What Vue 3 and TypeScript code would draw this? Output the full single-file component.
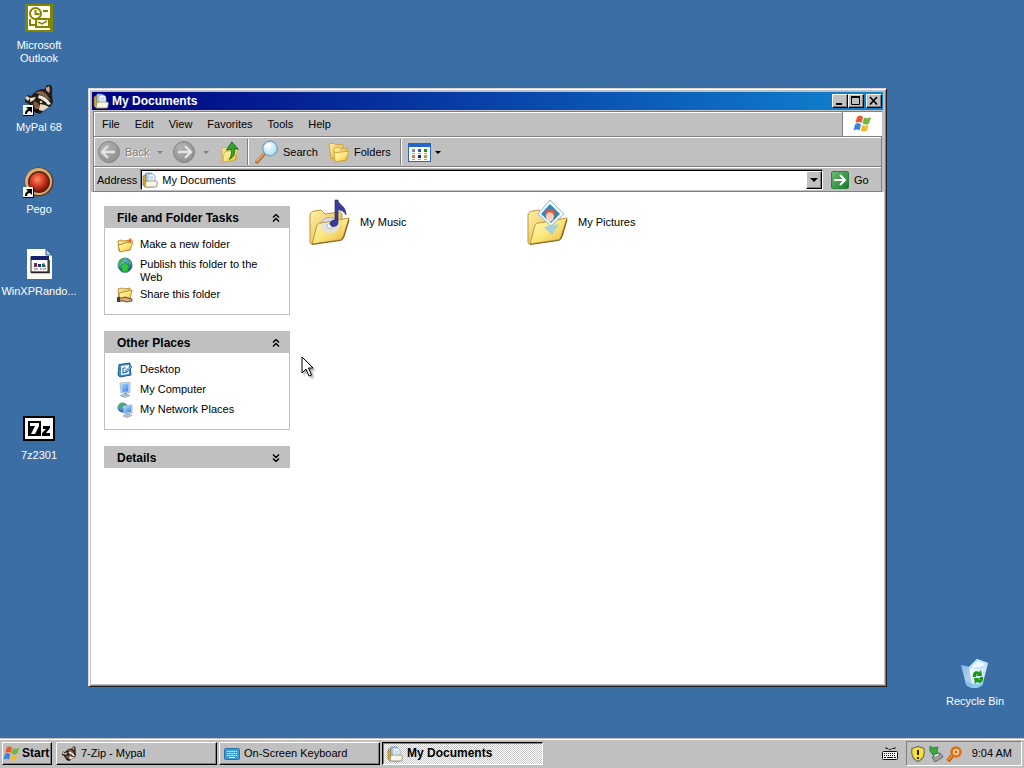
<script setup lang="ts">
import { ref } from 'vue'

interface Entry {
  icon: string
  label: string
}
interface DesktopItem extends Entry {
  row: number
  shortcut?: boolean
}
interface Task extends Entry {
  active?: boolean
}
interface Panel {
  title: string
  open: boolean
  items: Entry[]
}

const desktopItems: DesktopItem[] = [
  { icon: 'outlook', label: 'Microsoft Outlook', row: 1 },
  { icon: 'raccoon', label: 'MyPal 68', row: 2, shortcut: true },
  { icon: 'pego', label: 'Pego', row: 3, shortcut: true },
  { icon: 'script', label: 'WinXPRando...', row: 4 },
  { icon: 'sevenzip', label: '7z2301', row: 6 },
]

const menus: string[] = ['File', 'Edit', 'View', 'Favorites', 'Tools', 'Help']

const panels = ref<Panel[]>([
  {
    title: 'File and Folder Tasks',
    open: true,
    items: [
      { icon: 'newfolder', label: 'Make a new folder' },
      { icon: 'publish', label: 'Publish this folder to the Web' },
      { icon: 'share', label: 'Share this folder' },
    ],
  },
  {
    title: 'Other Places',
    open: true,
    items: [
      { icon: 'desk', label: 'Desktop' },
      { icon: 'computer', label: 'My Computer' },
      { icon: 'network', label: 'My Network Places' },
    ],
  },
  { title: 'Details', open: false, items: [] },
])

const folders: Entry[] = [
  { icon: 'music', label: 'My Music' },
  { icon: 'pictures', label: 'My Pictures' },
]

const tasks: Task[] = [
  { icon: 'raccoon', label: '7-Zip - Mypal' },
  { icon: 'keyboard', label: 'On-Screen Keyboard' },
  { icon: 'docs', label: 'My Documents', active: true },
]

const address = ref('My Documents')
</script>

<template>
  <div class="screen">
    <svg class="defs" aria-hidden="true">
      <defs>
        <linearGradient id="gFolder" x1="0" y1="0" x2="1" y2="1">
          <stop offset="0" stop-color="#fffbc4" />
          <stop offset="0.5" stop-color="#fbe87c" />
          <stop offset="1" stop-color="#e8b43c" />
        </linearGradient>
        <linearGradient id="gBack" x1="0" y1="0" x2="1" y2="1">
          <stop offset="0" stop-color="#fff3a6" />
          <stop offset="1" stop-color="#dda93a" />
        </linearGradient>
        <radialGradient id="gGrey" cx="0.35" cy="0.3" r="0.8">
          <stop offset="0" stop-color="#b4b4b4" />
          <stop offset="1" stop-color="#8c8c8c" />
        </radialGradient>
        <radialGradient id="gRed" cx="0.42" cy="0.36" r="0.65">
          <stop offset="0" stop-color="#ff8a66" />
          <stop offset="0.5" stop-color="#d84028" />
          <stop offset="1" stop-color="#7e1208" />
        </radialGradient>
        <radialGradient id="gLens" cx="0.4" cy="0.35" r="0.7">
          <stop offset="0" stop-color="#ffffff" />
          <stop offset="1" stop-color="#9fdcf6" />
        </radialGradient>
        <linearGradient id="gGo" x1="0" y1="0" x2="1" y2="1">
          <stop offset="0" stop-color="#6cc070" />
          <stop offset="1" stop-color="#127a26" />
        </linearGradient>
        <linearGradient id="gScreen" x1="0" y1="0" x2="1" y2="1">
          <stop offset="0" stop-color="#a8dcff" />
          <stop offset="1" stop-color="#3b7fdc" />
        </linearGradient>
        <linearGradient id="gBin" x1="0" y1="0" x2="1" y2="0.7">
          <stop offset="0" stop-color="#7fb4e4" />
          <stop offset="0.45" stop-color="#f2faff" />
          <stop offset="1" stop-color="#b4dcf4" />
        </linearGradient>
        <radialGradient id="gGlobe" cx="0.35" cy="0.3" r="0.8">
          <stop offset="0" stop-color="#7cc4e8" />
          <stop offset="1" stop-color="#12508c" />
        </radialGradient>
      </defs>

      <symbol id="outlook" viewBox="0 0 32 32">
        <rect x="2" y="2" width="28" height="28" fill="#848400" />
        <rect x="5" y="4" width="22" height="24" fill="#fffff2" />
        <path d="M7 17v6h5" fill="none" stroke="#848400" stroke-width="2" />
        <rect x="13" y="17" width="13" height="8" fill="#fffff2" stroke="#848400" stroke-width="2" />
        <path d="M15 20l4 2 5-3" fill="none" stroke="#848400" stroke-width="1.500" />
        <circle cx="12.500" cy="11.500" r="5.500" fill="#fffff2" stroke="#848400" stroke-width="2" />
        <path d="M12.500 8v4h4M20 9h5" fill="none" stroke="#848400" stroke-width="2" />
      </symbol>

      <symbol id="raccoon" viewBox="0 0 32 32">
        <path d="M2 14l2-3 4 1 4-4c4-3 7-3 10-3l2-4 4 0c2 4 1 7 1 10l1 7-2 4-6 4-5 4-6-2-5-8-4-2z" fill="#241c17" />
        <path d="M23 4l3-2c1 3 1 5 0 7l-3-3z" fill="#d0a488" />
        <path d="M2 14l2-2 3 2-2 3z" fill="#ead8c8" />
        <path d="M12 9c5-3 9-2 12 2l4 6-5-3c-4-3-7-4-11-5z" fill="#85664f" />
        <path d="M16 11c5 1 9 4 12 9l-3 1c-3-4-6-6-10-7z" fill="#f6eee4" />
        <path d="M7 14l6-1-2 3-4 2z" fill="#f0e4d6" />
        <path d="M11 17l4 2 2 5-3 3-4-6z" fill="#80583c" />
        <path d="M17 20l5 1 4 2-6 4-4-1z" fill="#e8dacb" />
        <circle cx="18" cy="18" r="1.300" fill="#e7c08e" />
        <circle cx="14" cy="27" r="2" fill="#080808" />
      </symbol>

      <symbol id="pego" viewBox="0 0 32 32">
        <circle cx="16" cy="16" r="14.500" fill="#5e3d22" />
        <circle cx="15.500" cy="15.500" r="13.500" fill="#d8b07a" />
        <circle cx="16" cy="16" r="11" fill="#64210f" />
        <circle cx="16" cy="16" r="9.500" fill="url(#gRed)" />
      </symbol>

      <symbol id="script" viewBox="0 0 32 32">
        <path d="M4 1h19l6 6v24H4z" fill="#fbfbf4" />
        <path d="M23 1v6h6z" fill="#bfd2e8" stroke="#29588c" />
        <rect x="8" y="9" width="17" height="15" fill="#fff" stroke="#222" />
        <rect x="8" y="8" width="18" height="4" fill="#16206e" />
        <path d="M8 24.500h18V12" fill="none" stroke="#222" stroke-width="1.500" />
        <path d="M11 15h3v4h-3z" fill="#7b2a48" />
        <path d="M15 16h3v3h-3z" fill="#1c2c90" />
        <path d="M19 16l2-1 2 4h-4z" fill="#1c6a4a" />
        <path d="M11 21h4M17 21h2M20 21h3" stroke="#a05060" />
      </symbol>

      <symbol id="sevenzip" viewBox="0 0 32 32">
        <rect y="4" width="32" height="25" fill="#000" />
        <rect x="2" y="6" width="28" height="21" fill="#fff" />
        <rect x="5" y="9" width="13" height="15" fill="#000" />
        <path d="M7 11h9v3l-4 8H8l4-8H7z" fill="#fff" />
        <path d="M20 14h7v2l-4 5h4v3h-8v-3l4-4h-3z" fill="#000" />
      </symbol>

      <symbol id="shortcut" viewBox="0 0 11 11">
        <rect width="11" height="11" fill="#000" />
        <rect width="10" height="10" fill="#fff" />
        <path d="M3 2h6v6L7 6C5 6 4 7 4 9H2c0-3 1-4 3-5z" fill="#000" />
      </symbol>

      <symbol id="bin" viewBox="0 0 32 32">
        <path d="M2 7l8 2 8-8 11 4-5 20c-1 6-14 7-17 1z" fill="url(#gBin)" />
        <path d="M10 9l8-8 11 4-3 4c-5 3-11 2-16 0z" fill="#c2e0f6" />
        <path d="M12 9l7-6 7 3c-3 3-8 5-14 3z" fill="#eef8ff" />
        <path d="M2 7l8 2 3 20c-3 0-5-1-6-3z" fill="#6ca4da" opacity="0.500" />
        <path d="M6 22c5 5 13 5 18 2l-1 3c-3 4-13 4-16 0z" fill="#74bcea" opacity="0.700" />
        <path d="M14 19c-1-5 3-7 6-5l2-2 1 6h-6l2-2c-2 0-2 1-2 3zM24 19c1 5-3 7-6 5l-2 2-1-6h6l-2 2c2 0 2-1 2-3z" fill="#1e961e" />
      </symbol>

      <symbol id="docs" viewBox="0 0 16 16">
        <path d="M1 4l3-2v8l10 3-2 2H3l-2-2z" fill="#d9a72c" stroke="#8c6a14" stroke-width="0.600" />
        <path d="M4 1h5l2 2v8H4z" fill="#cfe4ff" stroke="#4b7dc0" stroke-width="0.800" />
        <path d="M6 2h5l2 2v7H6z" fill="#fff" stroke="#6c98d0" stroke-width="0.800" />
        <path d="M7.500 5h4M7.500 7h4" stroke="#8ab4e4" stroke-width="0.900" />
        <path d="M4 9h10.500l1 1-1 5H3z" fill="#f8f6e4" stroke="#8c8c68" stroke-width="0.800" />
      </symbol>

      <symbol id="flag" viewBox="0 0 20 18">
        <path d="M4 2c2-2 4-2 6 0L8.500 8C7 6.500 4.500 6.500 2.500 8z" fill="#f0532a" />
        <path d="M11 2.500c2 1 4 1 7-.5L16 8.500c-2 1.500-4 1.500-6.500 0z" fill="#72b63c" />
        <path d="M2 9.500c2-2 4-2 6 0L6.500 15.500C5 14 3 14 .5 15.500z" fill="#3f83dc" />
        <path d="M9.200 10c2 1 4 1 6.500-.5l-1.700 6c-2 1.500-4 1.500-6.300 0z" fill="#f4bc2a" />
      </symbol>

      <symbol id="back" viewBox="0 0 22 22">
        <circle cx="11" cy="11" r="10.500" fill="url(#gGrey)" stroke="#858585" />
        <path d="M10 5l-6 6 6 6M4.500 11H17" fill="none" stroke="#e4e4e4" stroke-width="2.400" />
      </symbol>
      <symbol id="forward" viewBox="0 0 22 22">
        <circle cx="11" cy="11" r="10.500" fill="url(#gGrey)" stroke="#858585" />
        <path d="M12 5l6 6-6 6M17.500 11H5" fill="none" stroke="#e4e4e4" stroke-width="2.400" />
      </symbol>

      <symbol id="up" viewBox="0 0 22 24">
        <path d="M2 8l5-1 2 2 9-2v13L3 23z" fill="url(#gBack)" stroke="#c89c30" stroke-width="0.700" />
        <path d="M5 12l15-3-4 12-13 2z" fill="url(#gFolder)" stroke="#c89c30" stroke-width="0.700" />
        <path d="M13 1l7 8-4-1c1 6-1 10-6 12 3-4 3-8 2-11L7 10z" fill="#2fa52c" stroke="#0f6417" stroke-width="0.900" />
      </symbol>

      <symbol id="search" viewBox="0 0 24 24">
        <path d="M9 14l-7 8" stroke="#b5783c" stroke-width="3.600" stroke-linecap="round" />
        <path d="M9 13l-7 8" stroke="#e6b078" stroke-width="1.200" stroke-linecap="round" />
        <circle cx="15" cy="8.500" r="7.300" fill="url(#gLens)" stroke="#7d9db8" stroke-width="1.300" />
        <path d="M10.500 8a5 5 0 0 1 5-4" fill="none" stroke="#fff" stroke-width="2" />
      </symbol>

      <symbol id="folders" viewBox="0 0 22 22">
        <path d="M1 3l5-1 2 2 7-1v12L3 18z" fill="url(#gBack)" stroke="#c89c30" stroke-width="0.800" />
        <path d="M6 7l5-1 2 2 6-1v12L7 21z" fill="url(#gBack)" stroke="#c89c30" stroke-width="0.800" />
        <path d="M6 12l15-2-3 9-11 2z" fill="url(#gFolder)" stroke="#c89c30" stroke-width="0.800" />
      </symbol>

      <symbol id="views" viewBox="0 0 23 19">
        <rect x="0.500" y="0.500" width="22" height="18" fill="#fff" stroke="#2c66bc" />
        <rect width="23" height="4" fill="#2466c8" />
        <path d="M4 6h3v3H4z" fill="#8888a0" />
        <path d="M10 6h3v3h-3z" fill="#2858b8" />
        <path d="M16 6h3v3h-3z" fill="#1c8c24" />
        <path d="M4 12h3v3H4z" fill="#e07838" />
        <path d="M10 12h3v3h-3z" fill="#142c78" />
        <path d="M16 12h3v3h-3z" fill="#b8a030" />
        <path d="M4 10.500h3M10 10.500h3M16 10.500h3M4 16.500h3M10 16.500h3M16 16.500h3" stroke="#9ca8b8" />
      </symbol>

      <symbol id="go" viewBox="0 0 18 18">
        <rect x="0.500" y="0.500" width="17" height="17" rx="1" fill="url(#gGo)" stroke="#2d8240" />
        <path d="M9 4l5 5-5 5M14 9H3" fill="none" stroke="#fff" stroke-width="2" />
      </symbol>

      <symbol id="newfolder" viewBox="0 0 16 16">
        <path d="M1 4l4-1 1 1 7-1v10L2 14z" fill="url(#gBack)" stroke="#a87c20" stroke-width="0.800" />
        <path d="M1 8l5-1 1-1 9-1-3 8-10 2z" fill="url(#gFolder)" stroke="#a87c20" stroke-width="0.800" />
        <path d="M13 .5l1 2 2 .5-2 1.500-.5 2-1.500-1.500-2-.5 2-1.500z" fill="#ec6a24" />
      </symbol>
      <symbol id="publish" viewBox="0 0 16 16">
        <circle cx="8" cy="8" r="7.500" fill="url(#gGlobe)" />
        <path d="M2 4c2-3 5-3 6-3L7 4 4 7 1 8zM11 2l3 3 1 3-3-1z" fill="#4cae50" />
        <path d="M8 5l6 6h-3v4H5v-4H2z" fill="#36c63e" stroke="#0c7422" stroke-width="0.700" />
      </symbol>
      <symbol id="share" viewBox="0 0 16 16">
        <path d="M1 2l4-1 2 1 6-1v9L2 13z" fill="url(#gBack)" stroke="#a87c20" stroke-width="0.800" />
        <path d="M2 6l13-3-2 9-10 2z" fill="url(#gFolder)" stroke="#a87c20" stroke-width="0.800" />
        <path d="M2 11h3l3-1 3 1 4 1v2l-5 1-4-1H2z" fill="#d8a878" stroke="#4c3420" stroke-width="0.800" />
        <path d="M0 10h3v5H0z" fill="#34405c" />
      </symbol>
      <symbol id="desk" viewBox="0 0 16 16">
        <path d="M2 2.500L13 1l1 12-11 2-2-2z" fill="#3d8cc8" stroke="#205c94" />
        <path d="M4 4l8-1v9l-8 1z" fill="#f4faff" />
        <path d="M6 6h3M6 6v5l4-1V8" fill="none" stroke="#2d76b4" stroke-width="1.200" />
        <path d="M8 9l6-5 1 1-5 5z" fill="#9ccaf0" stroke="#205c94" stroke-width="0.700" />
      </symbol>
      <symbol id="computer" viewBox="0 0 16 16">
        <path d="M3 1l10-.5v10L4 11z" fill="#d6e6f6" stroke="#8ca4c0" stroke-width="0.700" />
        <path d="M4 2l7.500-.4v8L5 10z" fill="url(#gScreen)" />
        <path d="M7 11h3v2H7z" fill="#8aa8c8" />
        <path d="M3 13.500l6-1.500 4 1.500-5 2z" fill="#b4c8dc" stroke="#7890ac" stroke-width="0.600" />
      </symbol>
      <symbol id="network" viewBox="0 0 16 16">
        <circle cx="5.500" cy="5.500" r="5" fill="url(#gGlobe)" />
        <path d="M2 3c2-2 4-2 5-2L5 5 2 7zM6 6l3 1-3 3z" fill="#3cb44c" />
        <path d="M6 4l9-1v8l-8 1z" fill="#d6e6f6" stroke="#7c9cc0" stroke-width="0.700" />
        <path d="M7 5l7-1v6l-6.500 1z" fill="url(#gScreen)" />
        <path d="M6 14l5-2 4 1.500-5 2z" fill="#b4c8dc" stroke="#7890ac" stroke-width="0.600" />
      </symbol>

      <symbol id="music" viewBox="0 0 48 48">
        <path d="M4 17c0-3 3-4 5-4l6-1 4 4 14-2c3 0 3 2 3 4v22L6 46c-2 0-2-1-2-3z" fill="url(#gBack)" stroke="#c09434" />
        <ellipse cx="24" cy="28" rx="10" ry="8.500" fill="#dcdcec" stroke="#a8a8c0" />
        <path d="M11 27c1-1 2-2 4-2l28-5-6 19c-1 2-2 3-4 3L6 46z" fill="url(#gFolder)" fill-opacity="0.900" stroke="#c09434" />
        <path d="M15 26l19-3c1 6-4 12-10 12-5 0-9-4-9-9z" fill="#dedeea" opacity="0.800" />
        <ellipse cx="24" cy="28" rx="3" ry="2.500" fill="#f8f8ff" stroke="#b8b8cc" />
        <path d="M29 2h3c0 5 8 5 8 15-2-4-5-5-8-5v13c0 4-7 5-8 1 0-3 3-4 5-4z" fill="#3c3c98" stroke="#202060" stroke-width="0.600" />
        <path d="M6 46.500l28-4c2 0 3-2 4-4l5-17" fill="none" stroke="#826420" stroke-width="1.200" />
      </symbol>
      <symbol id="pictures" viewBox="0 0 48 48">
        <path d="M4 17c0-3 3-4 5-4l6-1 4 4 14-2c3 0 3 2 3 4v22L6 46c-2 0-2-1-2-3z" fill="url(#gBack)" stroke="#c09434" />
        <path d="M11 27c1-1 2-2 4-2l28-5-6 19c-1 2-2 3-4 3L6 46z" fill="url(#gFolder)" stroke="#c09434" />
        <path d="M6 46.500l28-4c2 0 3-2 4-4l5-17" fill="none" stroke="#826420" stroke-width="1.200" />
        <path d="M26 2l14 14-13 12-13-12z" fill="#f4f9ff" stroke="#9cb4cc" />
        <path d="M26 6l10 10-9 9-10-9z" fill="#2c88bc" />
        <circle cx="26" cy="16" r="5" fill="#e4583c" />
        <path d="M22 18c0-5 7-5 8 0l-1 4-3 2-3-2z" fill="#f8d0bc" />
        <path d="M20 29l15-3-7 11z" fill="#94ccec" fill-opacity="0.850" />
      </symbol>

      <symbol id="keyboard" viewBox="0 0 16 16">
        <rect x="0.500" y="2.500" width="15" height="11" rx="1" fill="#3d9cd4" stroke="#2474a8" />
        <path d="M3 5.500h10M3 7.500h10M3 9.500h10" stroke="#d8f2ff" stroke-dasharray="1.500 0.700" />
        <path d="M5 11.500h6" stroke="#d8f2ff" />
      </symbol>
      <symbol id="traykey" viewBox="0 0 16 14">
        <path d="M4 0v1.500h2l1 1h2l1-1h3V0" fill="none" stroke="#222" />
        <rect x="0.500" y="4.500" width="15" height="8" rx="1" fill="#f4f4f4" stroke="#111" />
        <path d="M2 6.500h12M2 8.500h12" stroke="#111" stroke-dasharray="1 1" />
        <path d="M2 10.500h2M5 10.500h6M12 10.500h2" stroke="#111" />
      </symbol>
      <symbol id="shield" viewBox="0 0 16 16">
        <path d="M8 .5l6 2c1 6-1 11-6 13-5-2-7-7-6-13z" fill="#f8e22c" stroke="#6c6c6c" stroke-width="1.200" />
        <path d="M8 4v5M8 11v2" stroke="#222" stroke-width="2" />
      </symbol>
      <symbol id="eject" viewBox="0 0 16 16">
        <path d="M4 11l8-4 3 4-8 5z" fill="#a0a4a0" stroke="#505450" stroke-width="0.800" />
        <path d="M5 8l5-1 2 2-5 3z" fill="#d8dcd8" stroke="#505450" stroke-width="0.600" />
        <path d="M2 0l3 2 5-1-1 3 1 3-5 2-3-4z" fill="#38ac3c" stroke="#146c20" stroke-width="0.700" />
      </symbol>
      <symbol id="key" viewBox="0 0 16 16">
        <path d="M6 10l-4 5" stroke="#c45208" stroke-width="4" />
        <circle cx="10" cy="6" r="4.500" fill="#f4d4b0" stroke="#e06c10" stroke-width="2.600" />
        <path d="M6 10l-4 4" stroke="#f48820" stroke-width="2" />
        <circle cx="10" cy="6" r="1.500" fill="#e06c10" />
      </symbol>
      <symbol id="chevrons" viewBox="0 0 8 8">
        <path d="M1 3.500l3-3 3 3M1 7.500l3-3 3 3" fill="none" stroke="#000" stroke-width="1.400" />
      </symbol>
    </svg>

    <main class="desktop">
      <div class="icon-grid">
        <button
          v-for="item in desktopItems"
          :key="item.label"
          class="shortcut-item"
          :class="`row-${item.row}`"
          type="button"
        >
          <span class="pic">
            <svg class="i32"><use :href="`#${item.icon}`" /></svg>
            <svg v-if="item.shortcut" class="overlay"><use href="#shortcut" /></svg>
          </span>
          <span class="caption">{{ item.label }}</span>
        </button>
      </div>

      <button class="shortcut-item recycle" type="button">
        <svg class="i32"><use href="#bin" /></svg>
        <span class="caption">Recycle Bin</span>
      </button>

      <section class="window" aria-label="My Documents">
        <header class="titlebar">
          <svg class="i16"><use href="#docs" /></svg>
          <h1>My Documents</h1>
          <div class="controls">
            <button class="ctl" type="button" aria-label="Minimize">
              <svg viewBox="0 0 12 10"><path d="M2 8h6" stroke="#000" stroke-width="2" /></svg>
            </button>
            <button class="ctl" type="button" aria-label="Maximize">
              <svg viewBox="0 0 12 10"><path d="M1.500 1v7.500h8V1" fill="none" stroke="#000" /><path d="M1 1h9" stroke="#000" stroke-width="2" /></svg>
            </button>
            <button class="ctl close" type="button" aria-label="Close">
              <svg viewBox="0 0 12 10"><path d="M2 1l7 7.500M9 1L2 8.500" stroke="#000" stroke-width="1.700" /></svg>
            </button>
          </div>
        </header>

        <nav class="menubar">
          <div class="menus">
            <button v-for="m in menus" :key="m" type="button">{{ m }}</button>
          </div>
          <div class="brand"><svg class="brand-flag"><use href="#flag" /></svg></div>
        </nav>

        <div class="toolbar">
          <button class="tool dim back-tool" type="button" disabled>
            <svg class="i22"><use href="#back" /></svg>Back<i class="arrow grey"></i>
          </button>
          <button class="tool dim forward-tool" type="button" disabled aria-label="Forward">
            <svg class="i22"><use href="#forward" /></svg><i class="arrow grey"></i>
          </button>
          <button class="tool" type="button" aria-label="Up">
            <svg class="i22"><use href="#up" /></svg>
          </button>
          <span class="sep"></span>
          <button class="tool search-tool" type="button">
            <svg class="i24"><use href="#search" /></svg>Search
          </button>
          <button class="tool folder-tool" type="button">
            <svg class="i22"><use href="#folders" /></svg>Folders
          </button>
          <span class="sep"></span>
          <button class="tool views-tool" type="button" aria-label="Views">
            <svg class="views-icon"><use href="#views" /></svg><i class="arrow"></i>
          </button>
        </div>

        <form class="addressbar" @submit.prevent>
          <label for="address">Address</label>
          <div class="combo">
            <svg class="i16"><use href="#docs" /></svg>
            <input id="address" v-model="address" type="text" />
            <button type="button" class="drop" aria-label="Show addresses"><i class="arrow wide"></i></button>
          </div>
          <button class="go" type="submit"><svg class="i18"><use href="#go" /></svg>Go</button>
        </form>

        <div class="content">
          <aside class="side">
            <section v-for="p in panels" :key="p.title" class="panel">
              <h2>
                <button type="button" :aria-expanded="p.open" @click="p.open = !p.open">
                  {{ p.title }}
                  <svg class="chev" :class="{ down: !p.open }"><use href="#chevrons" /></svg>
                </button>
              </h2>
              <ul v-if="p.open && p.items.length">
                <li v-for="it in p.items" :key="it.label">
                  <a href="#"><svg class="i16"><use :href="`#${it.icon}`" /></svg><span>{{ it.label }}</span></a>
                </li>
              </ul>
            </section>
          </aside>
          <div class="files">
            <button v-for="f in folders" :key="f.label" class="folder" type="button">
              <svg class="i48"><use :href="`#${f.icon}`" /></svg>{{ f.label }}
            </button>
          </div>
        </div>
      </section>

      <svg class="cursor" viewBox="0 0 13 21" aria-hidden="true">
        <path d="M1 1v16l4-4 3 7 2.500-1L7.500 12H12z" fill="#fff" stroke="#000" />
      </svg>
    </main>

    <footer class="taskbar">
      <button class="start" type="button"><svg class="start-flag"><use href="#flag" /></svg>Start</button>
      <div class="tasks">
        <button
          v-for="t in tasks"
          :key="t.label"
          class="task"
          :class="{ active: t.active }"
          type="button"
        >
          <svg class="i16"><use :href="`#${t.icon}`" /></svg><span>{{ t.label }}</span>
        </button>
      </div>
      <button class="language" type="button" aria-label="Keyboard"><svg class="key-icon"><use href="#traykey" /></svg></button>
      <div class="tray">
        <svg class="i16"><use href="#shield" /></svg>
        <svg class="i16"><use href="#eject" /></svg>
        <svg class="i16"><use href="#key" /></svg>
        <time>9:04 AM</time>
      </div>
    </footer>
  </div>
</template>

<style>
body {
  margin: 0;
}
</style>

<style scoped>
.screen {
  display: flex;
  flex-direction: column;
  height: 100vh;
  overflow: hidden;
  background: #3a6ea5;
  color: #000;
  font: 11px/13px "Liberation Sans", Arial, sans-serif;
}
.screen * {
  box-sizing: border-box;
}
.defs {
  position: absolute;
  width: 0;
  height: 0;
}
svg {
  display: block;
  flex: none;
}
button {
  margin: 0;
  padding: 0;
  border: 0;
  background: none;
  color: inherit;
  font: inherit;
  text-align: left;
}
.i16 { width: 16px; height: 16px; }
.i18 { width: 18px; height: 18px; }
.i22 { width: 22px; height: 22px; }
.i24 { width: 24px; height: 24px; }
.i32 { width: 32px; height: 32px; }
.i48 { width: 48px; height: 48px; }

.desktop {
  position: relative;
  flex: 1;
  min-height: 0;
}
.icon-grid {
  display: grid;
  grid-template-rows: repeat(6, 82px);
  width: 78px;
  padding-top: 2px;
}
.shortcut-item {
  display: flex;
  flex-direction: column;
  align-items: center;
  align-self: start;
  gap: 5px;
  width: 78px;
  color: #fff;
}
.row-1 { grid-row: 1; }
.row-2 { grid-row: 2; }
.row-3 { grid-row: 3; }
.row-4 { grid-row: 4; }
.row-6 { grid-row: 6; }
.pic {
  position: relative;
}
.overlay {
  position: absolute;
  left: 0;
  bottom: 0;
  width: 11px;
  height: 11px;
}
.caption {
  text-align: center;
}
.row-1 .caption {
  width: 60px;
}
.recycle {
  position: absolute;
  right: 10px;
  bottom: 30px;
}

.window {
  position: absolute;
  inset: 88px 137px 51px 88px;
  display: flex;
  flex-direction: column;
  padding: 2px;
  background: #c0c0c0;
  border: 1px solid;
  border-color: #d4d4d4 #202020 #202020 #d4d4d4;
  box-shadow: inset 1px 1px #fff, inset -1px -1px #808080;
}
.titlebar {
  display: flex;
  align-items: center;
  gap: 3px;
  height: 18px;
  margin: 1px 1px 0;
  padding: 0 1px;
  background: linear-gradient(90deg, #000080, #1084d0);
  color: #fff;
}
h1,
h2 {
  margin: 0;
  font-size: 12px;
  line-height: 14px;
}
h1 {
  flex: 1;
}
.controls {
  display: flex;
}
.ctl {
  width: 16px;
  height: 14px;
  padding: 1px;
  background: #c0c0c0;
  border: 1px solid;
  border-color: #fff #000 #000 #fff;
  box-shadow: inset -1px -1px #808080;
}
.ctl svg {
  width: 12px;
  height: 10px;
}
.close {
  margin-left: 2px;
}
.menubar {
  display: flex;
  height: 26px;
  margin: 1px 2px 0;
  border: 1px solid #808080;
  border-width: 1px 0 1px 1px;
  box-shadow: inset 1px 1px #fff;
}
.menus {
  display: flex;
  flex: 1;
  align-items: center;
  gap: 15px;
  padding-left: 8px;
  border-right: 1px solid #808080;
}
.brand {
  display: flex;
  align-items: center;
  justify-content: center;
  width: 39px;
  background: #fff;
}
.brand-flag {
  width: 20px;
  height: 18px;
}
.toolbar {
  display: flex;
  align-items: center;
  height: 30px;
  margin: 0 2px;
  padding: 1px 0 0 4px;
  border: 1px solid #808080;
  border-width: 0 1px 1px;
  box-shadow: inset 1px 1px #fff;
}
.tool {
  display: flex;
  align-items: center;
  gap: 4px;
}
.dim {
  color: #808080;
  text-shadow: 1px 1px #fff;
}
.back-tool {
  gap: 5px;
  width: 75px;
}
.forward-tool {
  gap: 8px;
  width: 46px;
}
.arrow {
  width: 0;
  height: 0;
  border: solid transparent;
  border-width: 3px 3px 0;
  border-top-color: #000;
}
.arrow.grey {
  border-top-color: #808080;
}
.back-tool .arrow {
  margin-left: 3px;
}
.arrow.wide {
  border-width: 4px 4px 0;
}
.sep {
  width: 2px;
  height: 26px;
  margin: 0 6px;
  border-left: 1px solid #808080;
  border-right: 1px solid #fff;
}
.search-tool {
  width: 73px;
}
.folder-tool {
  width: 66px;
}
.views-icon {
  width: 23px;
  height: 19px;
}
.addressbar {
  display: flex;
  align-items: center;
  gap: 4px;
  height: 25px;
  margin: 0 2px;
  padding: 2px 0 0 3px;
  border: 1px solid #808080;
  border-width: 0 1px 1px;
  box-shadow: inset 1px 1px #fff;
}
.combo {
  display: flex;
  flex: 1;
  align-items: center;
  height: 20px;
  background: #fff;
  border: 1px solid;
  border-color: #000 #fff #fff #000;
  box-shadow: -1px -1px #808080;
}
.combo input {
  flex: 1;
  min-width: 0;
  margin: 0;
  padding: 0 0 0 4px;
  border: 0;
  outline: 0;
  background: none;
  color: inherit;
  font: inherit;
}
.drop {
  display: flex;
  align-items: center;
  justify-content: center;
  width: 16px;
  height: 18px;
  background: #c0c0c0;
  border: 1px solid;
  border-color: #fff #000 #000 #fff;
  box-shadow: inset -1px -1px #808080;
}
.go {
  display: flex;
  align-items: center;
  gap: 5px;
  width: 54px;
  padding-left: 4px;
}

.content {
  display: flex;
  flex: 1;
  min-height: 0;
  background: #fff;
}
.side {
  display: flex;
  flex: none;
  flex-direction: column;
  gap: 16px;
  width: 199px;
  padding: 14px 0 0 13px;
}
.panel h2 button {
  display: flex;
  align-items: center;
  justify-content: space-between;
  width: 100%;
  height: 22px;
  padding: 1px 10px 0 13px;
  background: #c0c0c0;
}
.chev {
  width: 8px;
  height: 8px;
}
.down {
  transform: scaleY(-1);
}
.panel ul {
  display: flex;
  flex-direction: column;
  gap: 4px;
  margin: 0;
  padding: 10px 24px 10px 12px;
  border: 1px solid #c0c0c0;
  border-top: 0;
  list-style: none;
}
.panel li {
  min-height: 16px;
}
.panel a {
  display: flex;
  align-items: flex-start;
  gap: 7px;
  color: inherit;
  text-decoration: none;
}
.panel a svg {
  margin: -1px 0 -2px;
}
.files {
  display: grid;
  flex: 1;
  grid-template-columns: repeat(auto-fill, 218px);
  align-content: start;
  padding: 6px 0 0 16px;
}
.folder {
  display: flex;
  align-items: center;
  gap: 6px;
}
.cursor {
  position: absolute;
  left: 301px;
  top: 356px;
  width: 13px;
  height: 21px;
  filter: drop-shadow(2px 2px 1px rgb(0 0 0 / 35%));
}

.taskbar {
  display: flex;
  align-items: center;
  gap: 4px;
  height: 30px;
  padding: 0 2px;
  background: #c0c0c0;
  border-top: 1px solid #c0c0c0;
  box-shadow: inset 0 1px #fff;
}
.start,
.task {
  display: flex;
  align-items: center;
  height: 23px;
  border: 1px solid;
  border-color: #fff #000 #000 #fff;
  box-shadow: inset -1px -1px #808080;
}
.start {
  gap: 1px;
  width: 50px;
  font-size: 12px;
  font-weight: bold;
}
.start-flag {
  width: 18px;
  height: 16px;
}
.tasks {
  display: flex;
  flex: 1;
  gap: 2px;
}
.task {
  flex: 0 1 161px;
  gap: 4px;
  padding-left: 4px;
}
.task.active {
  background: repeating-conic-gradient(#fff 0 25%, #c8c8c8 0 50%) 0 0 / 2px 2px;
  border-color: #000 #fff #fff #000;
  box-shadow: inset 1px 1px #808080;
  font-size: 12px;
  font-weight: bold;
}
.language {
  padding-right: 4px;
}
.key-icon {
  width: 16px;
  height: 14px;
}
.tray {
  display: flex;
  align-items: center;
  gap: 2px;
  height: 25px;
  padding: 0 9px 0 3px;
  border: 1px solid;
  border-color: #808080 #fff #fff #808080;
}
.tray time {
  margin-left: 8px;
}
</style>
